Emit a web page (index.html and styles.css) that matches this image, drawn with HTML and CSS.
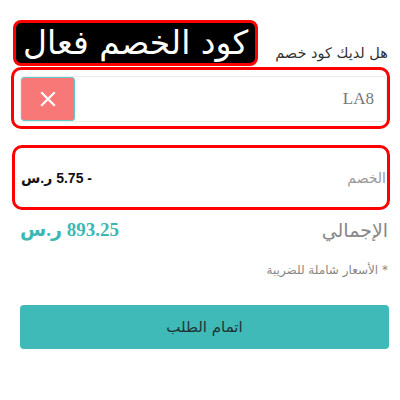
FILE: index.html
```html
<!DOCTYPE html>
<html lang="ar" dir="rtl">
<head>
<meta charset="utf-8">
<link rel="stylesheet" href="styles.css">
</head>
<body>
<div class="page">
  <div class="coupon-head">
    <span class="coupon-label">هل لديك كود خصم</span>
    <span class="badge">كود الخصم فعال</span>
  </div>
  <div class="outline coupon-box">
    <div class="field">
      <span class="code">LA8</span>
      <button class="clear" type="button">
        <svg width="16" height="16" viewBox="0 0 16 16"><path d="M2 2 L14 14 M14 2 L2 14" stroke="#fff" stroke-width="2.2" stroke-linecap="square"/></svg>
      </button>
    </div>
  </div>
  <div class="outline discount">
    <span class="discount-label">الخصم</span>
    <span class="discount-value">- 5.75 ر.س</span>
  </div>
  <div class="total">
    <span class="total-label">الإجمالي</span>
    <span class="total-value">893.25 ر.س</span>
  </div>
  <p class="note">* الأسعار شاملة للضريبة</p>
  <button class="submit" type="button">اتمام الطلب</button>
</div>
</body>
</html>
```
FILE: styles.css
```css
html, body {
  margin: 0;
  padding: 0;
  background: #fff;
}
body {
  font-family: "DejaVu Sans", sans-serif;
}
.page {
  width: 380px;
  padding: 0 10px;
}
.coupon-head {
  display: flex;
  justify-content: space-between;
  align-items: flex-end;
  padding-top: 20px;
  padding-right: 2px;
  padding-left: 3px;
}
.coupon-label {
  font-size: 14.5px;
  color: #333;
  padding-bottom: 5px;
}
.badge {
  background: #000;
  color: #fff;
  border: 3px solid #f00;
  border-radius: 8px;
  font-size: 33px;
  line-height: 40px;
  padding: 0 7px;
  height: 40px;
}
.outline {
  border: 3px solid #f00;
  border-radius: 10px;
}
.coupon-box {
  margin-top: 1px;
  margin-left: 1px;
  padding: 6px 0 4px 6px;
}
.field {
  display: flex;
  justify-content: space-between;
  align-items: center;
  height: 44px;
  border: 1px solid #ececec;
  border-radius: 4px;
}
.code {
  font-family: "Liberation Serif", serif;
  font-size: 17px;
  color: #777;
  padding-right: 12px;
}
.clear {
  width: 54px;
  height: 44px;
  margin: 0;
  background: #f87878;
  border: 1px solid #66c9c9;
  border-radius: 3px;
  display: flex;
  align-items: center;
  justify-content: center;
  padding: 0;
}
.discount {
  margin-top: 16px;
  margin-left: 2px;
  height: 59px;
  display: flex;
  justify-content: space-between;
  align-items: center;
  padding: 0 1px 0 6px;
}
.discount-label {
  font-size: 14px;
  color: #999;
}
.discount-value {
  font-family: "Liberation Sans", "DejaVu Sans", sans-serif;
  font-weight: bold;
  font-size: 14px;
  color: #111;
}
.total {
  display: flex;
  justify-content: space-between;
  align-items: center;
  margin-top: 8px;
  padding: 0 2px 0 10px;
}
.total-label {
  font-size: 19px;
  color: #888;
}
.total-value {
  font-family: "Liberation Serif", "DejaVu Sans", serif;
  font-weight: bold;
  font-size: 19px;
  color: #3cb8b4;
}
.note {
  margin: 22px 0 0 0;
  padding-right: 2px;
  font-size: 12px;
  color: #888;
}
.submit {
  display: block;
  width: 369px;
  height: 44px;
  margin: 28px 1px 0 10px;
  background: #3fbab8;
  border: none;
  border-radius: 4px;
  font-family: "DejaVu Sans", sans-serif;
  font-size: 15px;
  color: #1e3535;
}
```
